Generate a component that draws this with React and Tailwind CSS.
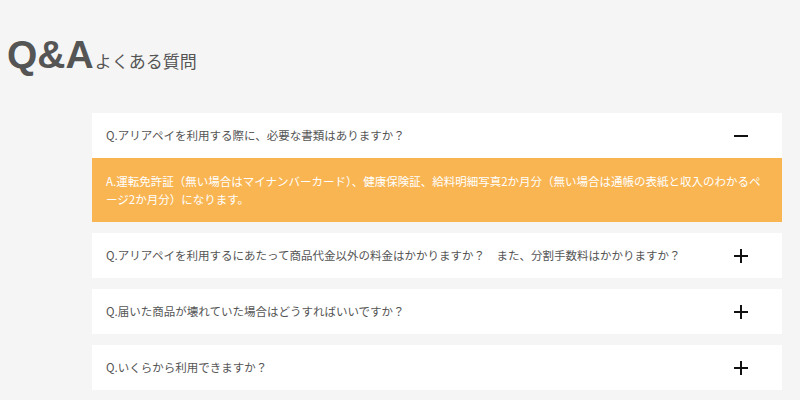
import React, { useState } from "react";

const faqs = [
  {
    q: "Q.アリアペイを利用する際に、必要な書類はありますか？",
    a: "A.運転免許証（無い場合はマイナンバーカード）、健康保険証、給料明細写真2か月分（無い場合は通帳の表紙と収入のわかるページ2か月分）になります。",
  },
  {
    q: "Q.アリアペイを利用するにあたって商品代金以外の料金はかかりますか？　また、分割手数料はかかりますか？",
    a: "A.商品代金以外の料金、分割手数料はかかりません。",
  },
  {
    q: "Q.届いた商品が壊れていた場合はどうすればいいですか？",
    a: "A.お手数ですが、お問い合わせよりご連絡ください。",
  },
  {
    q: "Q.いくらから利用できますか？",
    a: "A.商品によって異なります。",
  },
];

const font = "font-['Meiryo','Noto_Sans_CJK_JP',sans-serif]";

const Icon = ({ open }) => (
  <svg width="14" height="14" viewBox="0 0 14 14" className="shrink-0">
    <rect x="0" y="6" width="14" height="2" fill="#111" />
    {!open && <rect x="6" y="0" width="2" height="14" fill="#111" />}
  </svg>
);

export default function App() {
  const [openIndex, setOpenIndex] = useState(0);

  return (
    <div className={`min-h-[400px] w-full bg-[#f5f5f5] pt-[35px] ${font}`}>
      <h2 className="flex items-baseline pl-[7px] text-[#555]">
        <span className="font-['Liberation_Sans',Arial,sans-serif] text-[39px] font-bold leading-none">
          Q&amp;A
        </span>
        <span className="ml-[1px] text-[17px] leading-none text-[#555]">よくある質問</span>
      </h2>

      <div className="ml-[92px] mt-[39px] w-[690px]">
        {faqs.map((item, i) => (
          <div key={i} className="mb-[11px] bg-white">
            <button
              type="button"
              onClick={() => setOpenIndex(openIndex === i ? -1 : i)}
              className="flex h-[45px] w-full items-center justify-between pl-[14px] pr-[34px] text-left"
            >
              <span className="text-[11.5px] text-[#555]">{item.q}</span>
              <Icon open={openIndex === i} />
            </button>
            {openIndex === i && (
              <div className="bg-[#f9b552] py-[14px] pl-[14px] pr-[18px] text-[11.5px] leading-[18px] text-white">
                {item.a}
              </div>
            )}
          </div>
        ))}
      </div>
    </div>
  );
}
